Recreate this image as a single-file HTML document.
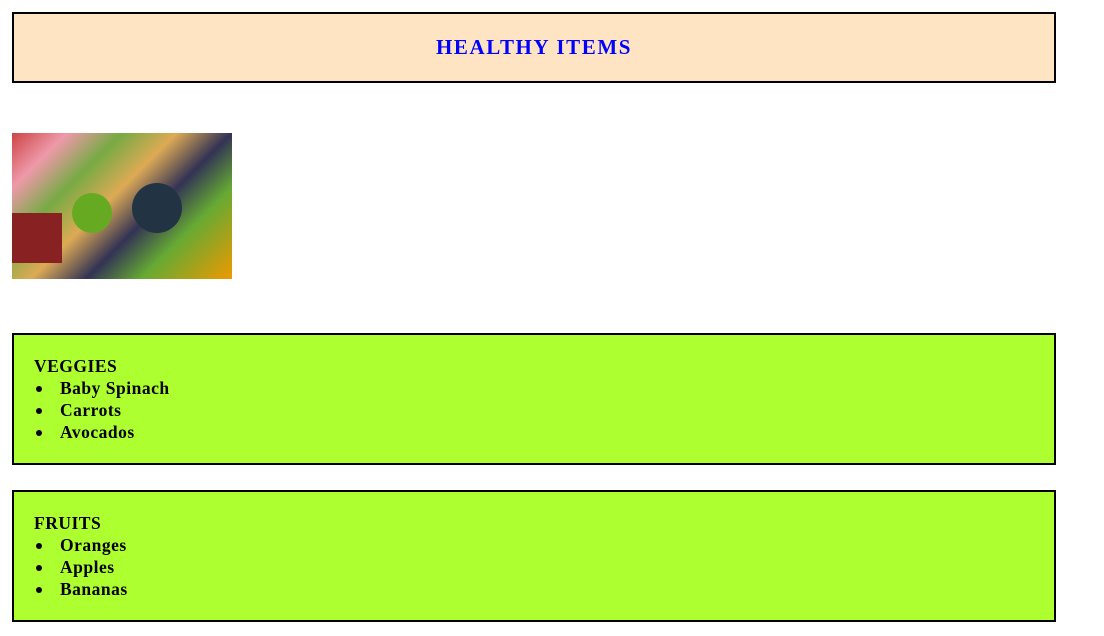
<!DOCTYPE html>
<html><head><style>
body{margin:0;background:#fff;font-family:"Liberation Serif",serif;}
.hdr{position:absolute;left:12px;top:12px;width:1040px;height:67px;border:2px solid #000;background:#ffe4c4;text-align:center;line-height:67px;color:#0000ff;font-weight:bold;font-size:21px;letter-spacing:1.6px;}
.img{position:absolute;left:12px;top:133px;width:220px;height:146px;background:linear-gradient(135deg,#c44 0%,#e9a 15%,#7a4 30%,#da5 45%,#335 60%,#6a3 75%,#e90 100%);}
.box{position:absolute;left:12px;width:1040px;height:128px;border:2px solid #000;background:#adff2f;font-weight:bold;font-size:17.5px;letter-spacing:0.5px;}
.box .t{position:absolute;left:20px;top:20px;line-height:22px;}
ul{margin:0;padding-left:26px;list-style:none;}
li{position:relative;}
li:before{content:"";position:absolute;left:-24px;top:9px;width:6px;height:6px;border-radius:50%;background:#000;}
</style></head><body>
<div class="hdr">HEALTHY ITEMS</div>
<div class="img">
<div style="position:absolute;left:60px;top:60px;width:40px;height:40px;border-radius:50%;background:#6a2"></div>
<div style="position:absolute;left:120px;top:50px;width:50px;height:50px;border-radius:50%;background:#234"></div>
<div style="position:absolute;left:0;top:80px;width:50px;height:50px;background:#822"></div>
</div>
<div class="box" style="top:333px"><div class="t">VEGGIES<ul><li>Baby Spinach</li><li>Carrots</li><li>Avocados</li></ul></div></div>
<div class="box" style="top:490px"><div class="t">FRUITS<ul><li>Oranges</li><li>Apples</li><li>Bananas</li></ul></div></div>
</body></html>
